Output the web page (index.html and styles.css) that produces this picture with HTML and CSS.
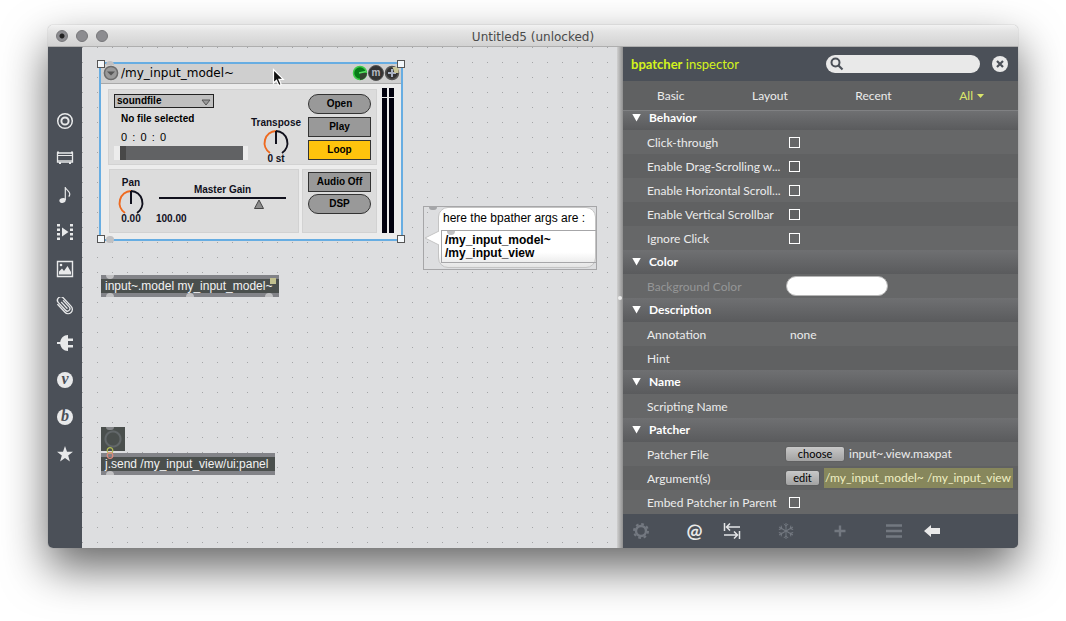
FILE: index.html
```html
<!DOCTYPE html>
<html lang="en">
<head>
<meta charset="utf-8">
<title>Untitled5 (unlocked)</title>
<link rel="stylesheet" href="styles.css">
</head>
<body>
<main class="window">
  <header class="titlebar">
    <div class="lights">
      <button class="light dirty" aria-label="Close window"></button>
      <button class="light" aria-label="Minimize window"></button>
      <button class="light" aria-label="Zoom window"></button>
    </div>
    <h1 class="title">Untitled5 (unlocked)</h1>
    <div></div>
  </header>
  <div class="content">
    <nav class="tools" aria-label="Objects">
      <button class="tool" aria-label="Objects"><svg width="18" height="18" viewBox="0 0 18 18" fill="none" stroke="#e8e9ea"><circle cx="9" cy="9" r="7.3" stroke-width="1.5"/><circle cx="9" cy="9" r="3.6" stroke-width="2"/></svg></button>
      <button class="tool" aria-label="Audio"><svg width="18" height="18" viewBox="0 0 18 18" fill="none" stroke="#e8e9ea"><path d="M1.500 4h15v9h-15z" stroke-width="1.300"/><path d="M1 6.500h16" stroke-width="1"/><path d="M2 11.500h14" stroke-width="1" opacity=".7"/><path d="M3 14h2M13 14h2M1 3.500h2M15 3.500h2" stroke-width="2"/></svg></button>
      <button class="tool" aria-label="Notes"><svg width="18" height="18" viewBox="0 0 18 18"><ellipse cx="6.500" cy="14.500" rx="3.200" ry="2.300" transform="rotate(-20 6.500 14.500)" fill="#e8e9ea"/><path d="M9.300 14V1c.5 3 4.500 4 4.500 7 0 1-.4 1.800-1 2.600" fill="none" stroke="#e8e9ea" stroke-width="1.200"/></svg></button>
      <button class="tool" aria-label="Video"><svg width="18" height="18" viewBox="0 0 18 18" fill="#e8e9ea"><path d="M6 4.500l6.500 4.500L6 13.500z"/><path d="M2.500 1v17M15.500 1v17" stroke="#e8e9ea" stroke-width="3" stroke-dasharray="2.500 2"/></svg></button>
      <button class="tool" aria-label="Images"><svg width="18" height="18" viewBox="0 0 18 18"><path d="M1.500 1.500h15v15h-15z" fill="none" stroke="#e8e9ea" stroke-width="1.400"/><path d="M3 14.500v-3l3-3 2 2.500 3.500-5 3.500 6v2.500z" fill="#e8e9ea"/><circle cx="5" cy="5" r="1.300" fill="#e8e9ea"/></svg></button>
      <button class="tool" aria-label="Plugins"><svg width="18" height="18" viewBox="0 0 18 18" fill="none" stroke="#e8e9ea" stroke-width="1.300" stroke-linecap="round"><g transform="rotate(-43 9 9)"><path d="M11.500 5v8.500a2.500 2.500 0 0 1-5 0V3a3.200 3.200 0 0 1 6.800 0v11.500a4.300 4.300 0 0 1-8.600 0V4M9 5v8" transform="translate(0 -1)"/></g></svg></button>
      <button class="tool" aria-label="Devices"><svg width="18" height="18" viewBox="0 0 18 18" fill="#e8e9ea"><path d="M1 8h3.200C5 4 7.500 1 12 1v3.500h5V7h-5v4h5v2.500h-5V17C7.500 17 5 14 4.200 10H1z"/></svg></button>
      <button class="tool" aria-label="Vizzie"><span class="letter">v</span></button>
      <button class="tool" aria-label="Beap"><span class="letter">b</span></button>
      <button class="tool" aria-label="Favorites"><svg width="18" height="18" viewBox="0 0 18 18" fill="#e8e9ea"><path d="M9 1l2 5.700 6 .1-4.800 3.700 1.700 5.900L9 12.900l-4.900 3.500 1.700-5.900L1 6.800l6-.1z"/></svg></button>
    </nav>

    <section class="canvas" aria-label="Patcher">
      <div class="node bpatcher">
        <div class="bp-head">
          <button class="bp-menu" aria-label="Module menu"><svg width="16" height="16" viewBox="0 0 16 16"><circle cx="8" cy="8" r="6.600" fill="#999" stroke="#6b6b6b" stroke-width="1.500"/><path d="M4 6.500h8L8 10.500z" fill="#555"/></svg></button>
          <span class="bp-name">/my_input_model~</span>
          <button class="bp-round" aria-label="Level"><svg width="16" height="16" viewBox="0 0 16 16"><circle cx="8" cy="8" r="6.500" fill="#077b18" stroke="#3ecb4a" stroke-width="1.500"/><path d="M8 8h7a7 7 0 0 1-7 7z" fill="#33452f"/><path d="M7 8l7-1.500" stroke="#5be065" stroke-width="1.400"/></svg></button>
          <button class="bp-round mute" aria-label="Mute">m</button>
          <button class="bp-round" aria-label="Add"><svg width="16" height="16" viewBox="0 0 16 16"><circle cx="8" cy="8" r="6.500" fill="#333" stroke="#555" stroke-width="1.500"/><path d="M8 4v8M4 8h8" stroke="#a9b2c4" stroke-width="2"/><path d="M8.500 2h6v6h-4z" fill="#c9c596"/></svg></button>
        </div>
        <div class="bp-body">
          <div class="panels">
            <div class="panel source">
              <div class="file">
                <select class="menu" aria-label="Source"><option>soundfile</option></select>
                <svg class="menu-arrow" width="10" height="7" viewBox="0 0 10 7"><path d="M1 1h8L5 6z" fill="#999" stroke="#555"/></svg>
                <span class="bp-text">No file selected</span>
                <span class="time"><span>0</span><span>:</span><span>0</span><span>:</span><span>0</span></span>
                <div class="scrub"><div class="scrub-bar"></div></div>
              </div>
              <div class="knob transpose">
                <span>Transpose</span>
                <svg class="dial" width="28" height="26" viewBox="0 0 28 26" fill="none" stroke-width="2"><path d="M8 24A12 12 0 0 1 14 2" stroke="#ee6a20"/><path d="M14 2a12 12 0 0 1 6 22M14 2v13" stroke="#10101c"/></svg>
                <span>0 st</span>
              </div>
              <div class="stack">
                <button class="bp-btn pill">Open</button>
                <button class="bp-btn">Play</button>
                <button class="bp-btn loop">Loop</button>
              </div>
            </div>
            <div class="panel mix">
              <div class="knob">
                <span>Pan</span>
                <svg class="dial" width="28" height="26" viewBox="0 0 28 26" fill="none" stroke-width="2"><path d="M8 24A12 12 0 0 1 14 2" stroke="#ee6a20"/><path d="M14 2a12 12 0 0 1 6 22M14 2v13" stroke="#10101c"/></svg>
                <span>0.00</span>
              </div>
              <div class="gain">
                <span class="gain-name">Master Gain</span>
                <svg class="gain-line" width="127" height="14" viewBox="0 0 127 14"><path d="M0 2h127" stroke="#10101c" stroke-width="2"/><path d="M100 4l4.500 8.500h-9z" fill="#8c8c8c" stroke="#444"/></svg>
                <span class="gain-value">100.00</span>
              </div>
            </div>
            <div class="panel audio">
              <button class="bp-btn">Audio Off</button>
              <button class="bp-btn pill">DSP</button>
            </div>
          </div>
          <div class="meters"><i class="meter"></i><i class="meter"></i></div>
        </div>
        <i class="handle nw"></i><i class="handle ne"></i><i class="handle sw"></i><i class="handle se"></i>
        <i class="port bp-in"></i><i class="port bp-out"></i>
      </div>

      <svg class="node cursor" width="14" height="20" viewBox="0 0 14 20"><path d="M1.500 1.500v13.500l3-2.800 2.300 5.300 2.400-1-2.300-5.200h4.400z" fill="#111" stroke="#fff" stroke-width="1.200"/></svg>

      <div class="node bubble">
        <i class="port in dim"></i>
        <svg class="tail" width="15" height="16" viewBox="0 0 15 16"><path d="M15 1L1 8l14 7" fill="#fff" stroke="#c4c4c4"/></svg>
        <p class="bubble-text">here the bpather args are :</p>
        <div class="message"><i class="port in"></i>/my_input_model~<br>/my_input_view</div>
      </div>

      <div class="node object model">input~.model my_input_model~
        <i class="port in"></i><i class="port out"></i><i class="port out mid"></i><i class="port out last"></i><i class="note"></i>
      </div>
      <button class="node bang" aria-label="Bang"><i class="port in dim"></i></button>
      <div class="node object send">j.send /my_input_view/ui:panel<i class="port out"></i></div>
      <svg class="node cord" width="8" height="12" viewBox="0 0 8 12" fill="none" stroke-width="1.200"><circle cx="4" cy="3.500" r="2.800" stroke="#b4bf55"/><circle cx="4" cy="8.500" r="2.800" stroke="#e0897c"/></svg>
    </section>

    <div class="splitter"><i class="grip"></i></div>

    <aside class="inspector">
      <header class="in-head">
        <h2 class="in-title"><b>bpatcher</b> inspector</h2>
        <div class="search">
          <svg width="14" height="14" viewBox="0 0 14 14" fill="none" stroke="#4b5058"><circle cx="5.500" cy="5.500" r="4" stroke-width="2"/><path d="M8.500 8.500l4 4" stroke-width="2.200"/></svg>
          <input class="search-box" type="search" aria-label="Search">
        </div>
        <button class="close" aria-label="Close inspector"><svg width="16" height="16" viewBox="0 0 16 16"><circle cx="8" cy="8" r="8" fill="#e9e9e9"/><path d="M5 5l6 6M11 5l-6 6" stroke="#4b5058" stroke-width="2.200"/></svg></button>
      </header>
      <nav class="tabs">
        <button class="tab">Basic</button>
        <button class="tab">Layout</button>
        <button class="tab">Recent</button>
        <button class="tab on">All <svg width="7" height="4" viewBox="0 0 7 4"><path d="M0 0h7L3.500 4z" fill="#dbe66a"/></svg></button>
      </nav>
      <div class="rows">
        <h3 class="group first">Behavior</h3>
        <div class="row"><label for="c1">Click-through</label><input id="c1" class="check" type="checkbox"></div>
        <div class="row alt"><label for="c2">Enable Drag-Scrolling w...</label><input id="c2" class="check" type="checkbox"></div>
        <div class="row"><label for="c3">Enable Horizontal Scroll...</label><input id="c3" class="check" type="checkbox"></div>
        <div class="row alt"><label for="c4">Enable Vertical Scrollbar</label><input id="c4" class="check" type="checkbox"></div>
        <div class="row"><label for="c5">Ignore Click</label><input id="c5" class="check" type="checkbox"></div>
        <h3 class="group">Color</h3>
        <div class="row off"><label for="bg">Background Color</label><button id="bg" class="swatch"></button></div>
        <h3 class="group">Description</h3>
        <div class="row"><span>Annotation</span><span class="value">none</span></div>
        <div class="row alt"><span>Hint</span></div>
        <h3 class="group">Name</h3>
        <div class="row"><span>Scripting Name</span></div>
        <h3 class="group">Patcher</h3>
        <div class="row"><span>Patcher File</span><div class="field"><button class="push choose">choose</button><span>input~.view.maxpat</span></div></div>
        <div class="row alt"><span>Argument(s)</span><div class="field"><button class="push">edit</button><span class="args">/my_input_model~ /my_input_view</span></div></div>
        <div class="row"><label for="c6">Embed Patcher in Parent</label><input id="c6" class="check" type="checkbox"></div>
      </div>
      <footer class="in-foot">
        <button class="act" aria-label="Settings"><svg width="18" height="18" viewBox="0 0 18 18" fill="none" stroke="#737880"><circle cx="9" cy="9" r="5" stroke-width="2.400"/><circle cx="9" cy="9" r="7" stroke-width="2" stroke-dasharray="2.750 2.750"/></svg></button>
        <button class="act at" aria-label="Attributes">@</button>
        <button class="act" aria-label="Swap"><svg width="18" height="18" viewBox="0 0 18 18" fill="none" stroke="#e4e5e7" stroke-width="1.500"><path d="M1.500 1v8M17 5H3M7 1.500L3.500 5 7 8.500M16.500 9v8M1 13h14M11 9.500l3.500 3.500-3.500 3.500"/></svg></button>
        <button class="act" aria-label="Freeze"><svg width="18" height="18" viewBox="0 0 18 18" fill="none" stroke="#737880" stroke-width="1"><path id="arm" d="M9 1v16M6.800 2l2.200 2.200L11.200 2M6.800 16L9 13.800l2.200 2.200"/><use href="#arm" transform="rotate(60 9 9)"/><use href="#arm" transform="rotate(120 9 9)"/></svg></button>
        <button class="act" aria-label="Add"><svg width="18" height="18" viewBox="0 0 18 18" stroke="#737880" stroke-width="2.400"><path d="M9 3.500v11M3.500 9h11"/></svg></button>
        <button class="act" aria-label="List"><svg width="18" height="18" viewBox="0 0 18 18" stroke="#737880" stroke-width="2.400"><path d="M1 3.500h16M1 9h16M1 14.500h16"/></svg></button>
        <button class="act" aria-label="Back"><svg width="18" height="18" viewBox="0 0 18 18" fill="#e9e9e9"><path d="M1 9l7-6v3h9v6H8v3z"/></svg></button>
      </footer>
    </aside>
  </div>
</main>
</body>
</html>
```
FILE: styles.css
```css
* { box-sizing: border-box; }
body { margin: 0; background: #fff; font-family: "Liberation Sans", Arial, sans-serif; overflow: hidden; }
button { margin: 0; padding: 0; border: 0; background: none; font: inherit; color: inherit; }
h1, h2, h3, p { margin: 0; font-weight: normal; }
svg { display: block; }

.window {
  display: flex; flex-direction: column;
  min-height: calc(100vh - 98px);
  margin: 25px 48px 73px;
  border-radius: 5px; overflow: hidden;
  box-shadow: 0 0 1px #777, 0 20px 45px rgba(0, 0, 0, .6);
}
.titlebar {
  display: grid; grid-template-columns: 1fr auto 1fr; align-items: center;
  height: 22px; border-bottom: 1px solid #aeaeae;
  background: linear-gradient(#f2f2f2, #e4e4e4 30%, #d2d2d2);
}
.lights { display: flex; gap: 8px; padding-left: 8px; }
.light { width: 12px; height: 12px; border-radius: 50%; border: 1px solid #77777a; background: #8c8c90; }
.dirty { background: radial-gradient(#222 0 2px, #8c8c90 3px); }
.title { padding-top: 2px; font: 12px/20px "DejaVu Sans", Verdana, sans-serif; color: #4a4a4a; }
.content { display: flex; flex: 1; }

.tools { display: flex; flex-direction: column; flex: none; width: 34px; padding-top: 55px; background: #4b5058; }
.tool { display: grid; place-items: center; height: 37px; }
.letter {
  width: 16px; height: 16px; border-radius: 50%; background: #e8e9ea; color: #4b5058;
  font: italic bold 16px/14px "Liberation Serif", serif; text-align: center;
}

.canvas {
  position: relative; flex: 1; overflow: hidden;
  background: linear-gradient(90deg, transparent 1px, #dddee0 1px) 0 0 / 15px 15px,
    linear-gradient(#a4a5a7 1px, #dddee0 1px) 0 0 / 15px 15px;
}
.node { position: absolute; }

/* Module view */
.bpatcher {
  left: 17px; top: 15px; width: 304px; height: 179px;
  border: 2px solid #67ade2; background: #ececec;
  font-size: 10px; line-height: 12px; font-weight: bold; color: #10101c;
}
.bp-head { display: flex; align-items: center; height: 20px; padding: 0 1px 1px 2px; border-bottom: 1px solid #a9a9a9; background: #cfcfcf; }
.bp-name { flex: 1; padding-left: 2px; font: 12px/18px "DejaVu Sans", Verdana, sans-serif; color: #000; }
.bp-round { width: 16px; height: 16px; }
.mute { border: 1px solid #555; border-radius: 50%; background: #333; color: #b5b9c4; font: bold 10px/12px "Liberation Sans", sans-serif; }
.bp-body { display: flex; gap: 5px; padding: 4px 7px 6px; }
.panels { display: grid; grid-template-columns: 191px 75px; gap: 4px 3px; padding-top: 1px; }
.panel { border: 1px solid #d2d2d2; background: #dcdcdc; }
.source { grid-column: span 2; display: flex; height: 76px; padding: 4px 5px; }
.file { position: relative; display: flex; flex-direction: column; width: 134px; }
.menu {
  appearance: none; width: 100px; height: 15px; padding: 0 2px; border: 1px solid #222; border-radius: 0;
  background: #bfbfbf; color: #000; font: bold 10px/12px "Liberation Sans", Arial, sans-serif;
}
.menu-arrow { position: absolute; left: 87px; top: 5px; }
.bp-text { padding: 5px 7px 0; color: #000; }
.time { display: flex; justify-content: space-between; width: 59px; padding: 5px 7px 2px; font-size: 11px; line-height: 14px; font-weight: normal; color: #000; }
.scrub { padding: 0 5px 0 6px; background: #ececec; }
.scrub-bar { height: 14px; border-left: 6px solid #484848; background: #616264; }
.knob { display: flex; flex-direction: column; align-items: center; width: 42px; }
.dial { flex: none; margin-bottom: -2px; }
.transpose { width: 56px; padding-top: 23px; }
.stack { display: flex; flex-direction: column; gap: 3px; margin-left: 4px; }
.bp-btn { width: 63px; height: 20px; border: 1px solid #333; background: #999; color: #000; }
.pill { border-radius: 10px; }
.loop { background: #ffc40d; }
.mix { display: flex; height: 64px; margin-left: 1px; padding-top: 7px; }
.gain { display: flex; flex-direction: column; padding: 7px 0 0 4px; }
.gain-name { width: 127px; margin-left: 3px; text-align: center; }
.gain-line { margin-left: 3px; }
.gain-value { padding-top: 3px; }
.audio { display: flex; flex-direction: column; gap: 2px; padding: 2px 5px; }
.meters { display: flex; gap: 2px; }
.meter { width: 5px; background: linear-gradient(#02020f 9px, #ececec 9px 10px, #02020f 10px); }
.handle { position: absolute; width: 8px; height: 8px; border: 1px solid #555; background: #f4f8fb; }
.nw { left: -4px; top: -4px; } .ne { right: -4px; top: -4px; }
.sw { left: -4px; bottom: -4px; } .se { right: -4px; bottom: -4px; }
.port { position: absolute; width: 8px; height: 4px; background: #c0c0c2; }
.in { left: 5px; top: 0; border-radius: 0 0 4px 4px; }
.out { left: 5px; bottom: 0; border-radius: 4px 4px 0 0; }
.mid { left: 85px; } .last { left: 164px; }
.bp-in { left: 5px; top: -3px; border-radius: 4px 4px 0 0; }
.bp-out { left: 5px; bottom: -4px; height: 7px; border-radius: 4px; }
.cursor { left: 190px; top: 21px; }

/* Comment bubble */
.bubble {
  left: 341px; top: 159px; width: 174px; padding: 0 0 1px 15px;
  border: 1px solid #a6a6a8; font-size: 12px; color: #000;
}
.bubble::before { content: ""; position: absolute; inset: 0 0 1px 14px; border: 1px solid #c4c4c4; border-radius: 10px; background: linear-gradient(#fff 75%, #e4e4e4); }
.dim { height: 3px; background: #a4a5a8; }
.bang .dim { background: #85878a; }
.tail { position: absolute; left: 0; top: 23px; }
.bubble-text { position: relative; padding: 4px 4px 5px; line-height: 14px; white-space: nowrap; }
.message { position: relative; margin: 0 -1px 5px 2px; padding: 3px 3px 2px; border: 1px solid #a6a6a8; font-weight: bold; line-height: 13px; }

/* Object boxes */
.object {
  height: 22px; padding: 0 4px; border: solid #828388; border-width: 4px 0;
  background: #4a4f4d; color: #f2f2f2; font-size: 12px; line-height: 14px; white-space: nowrap;
}
.object .in { top: -4px; } .object .out { bottom: -4px; }
.model { left: 19px; top: 228px; width: 178px; }
.send { left: 19px; top: 406px; width: 174px; }
.note { position: absolute; right: 3px; top: -1px; width: 6px; height: 6px; background: #c2c08e; }
.bang { left: 19px; top: 380px; width: 24px; height: 24px; background: radial-gradient(circle, #4a4f4d 6px, #626769 7px 8px, #4a4f4d 9px); }
.cord { left: 24px; top: 400px; }

.splitter { display: grid; place-items: center; flex: none; width: 6px; background: linear-gradient(90deg, #d0d0d0, #8f8f8f); }
.grip { width: 4px; height: 4px; border-radius: 50%; background: #eee; }

/* Inspector */
.inspector { display: flex; flex-direction: column; flex: none; width: 395px; background: #606162; color: #ececec; font: 12px/24px Lato, sans-serif; }
.in-head { display: flex; align-items: center; height: 34px; padding: 0 10px 0 8px; background: #4b5058; }
.in-title { flex: 1; color: #d4f31c; font-size: 13px; }
.search { display: flex; align-items: center; width: 154px; height: 18px; margin-right: 12px; padding-left: 4px; border-radius: 9px; background: #e9e9e9; }
.search-box { flex: 1; min-width: 0; border: 0; outline: 0; background: none; font: 12px Lato, sans-serif; }
.tabs { display: flex; justify-content: space-between; height: 30px; padding: 0 34px; border-bottom: 1px solid #808183; }
.tab { display: flex; align-items: center; gap: 4px; }
.on { color: #dbe66a; }
.rows { flex: 1; }
.group { display: flex; align-items: center; gap: 8px; height: 24px; padding: 0 0 1px 9px; background: linear-gradient(#6f7072, #5a5b5d); color: #fff; font-size: 12px; font-weight: bold; }
.group::before { content: ""; width: 9px; height: 8px; background: #fff; clip-path: polygon(0 0, 100% 0, 50% 100%); }
.first { height: 19px; padding-bottom: 6px; }
.row { display: grid; grid-template-columns: 139px 1fr; align-items: center; height: 24px; padding-left: 24px; background: #666768; line-height: 26px; white-space: nowrap; }
.row > * { max-height: 24px; }
.alt { background: #606162; }
.off { color: #959697; }
.check { appearance: none; width: 11px; height: 11px; margin: 0 3px; border: 1px solid #fff; }
.swatch { width: 102px; height: 20px; border: 1px solid #b5b5b5; border-radius: 10px; background: #fff; }
.value { padding-left: 4px; }
.field { display: flex; align-items: center; gap: 5px; padding-right: 5px; }
.push { width: 33px; height: 14px; border-radius: 2px; background: linear-gradient(#c8c8c8, #a2a2a2); box-shadow: 0 0 1px #333; color: #000; font-size: 11px; line-height: 14px; }
.choose { width: 58px; }
.args { flex: 1; height: 20px; padding-left: 1px; background: #87875c; color: #f0efc4; line-height: 20px; }
.in-foot { display: flex; align-items: center; height: 34px; padding: 0 77px 0 9px; background: #4b5058; }
.act { width: 18px; height: 18px; }
.act:nth-child(2), .act:nth-child(4), .act:nth-child(5), .act:nth-child(6) { margin-left: 36px; }
.act:nth-child(3), .act:nth-child(7) { margin-left: 20px; }
.at { color: #e9e9e9; font-size: 19px; line-height: 16px; font-weight: bold; }
```
